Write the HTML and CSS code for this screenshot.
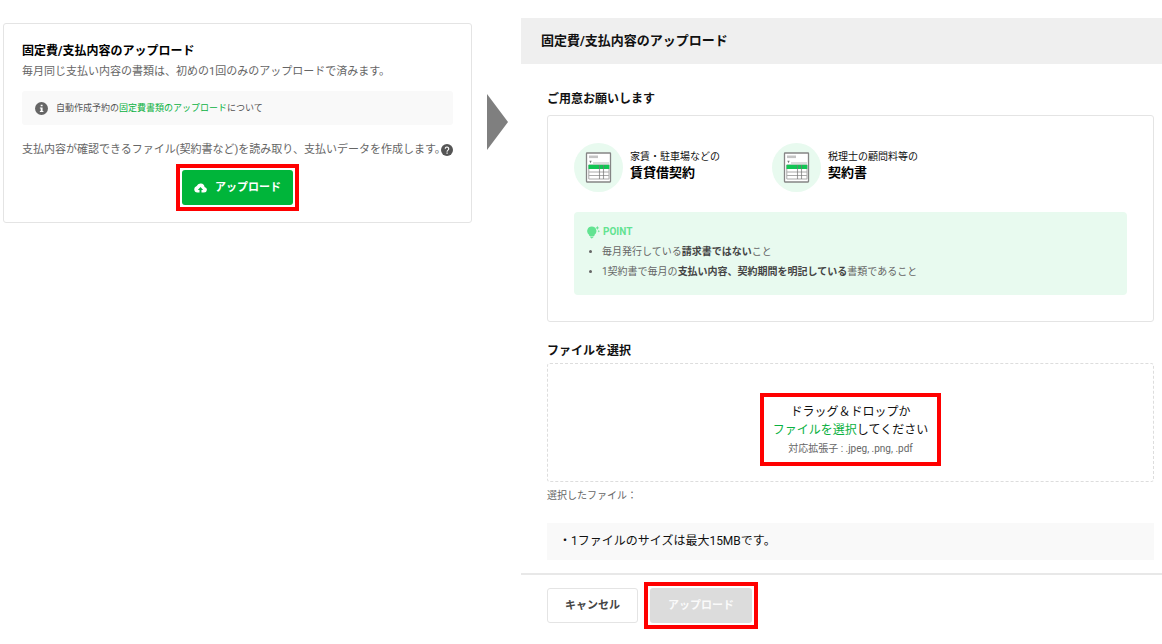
FILE: index.html
```html
<!DOCTYPE html>
<html lang="ja">
<head>
<meta charset="utf-8">
<meta name="viewport" content="width=device-width, initial-scale=1">
<title>固定費/支払内容のアップロード</title>
<link rel="stylesheet" href="styles.css">
</head>
<body>
<svg class="defs" width="0" height="0" aria-hidden="true">
  <symbol id="doc" viewBox="0 0 49 49">
    <circle cx="24.500" cy="24.500" r="24.500" fill="#e8faef"/>
    <rect x="12.500" y="10" width="24" height="29" rx="0.500" fill="#fff" stroke="#858585" stroke-width="1.300"/>
    <path d="M15 12.500h9v2.600h-9z" fill="#c4c4c4"/>
    <path d="M15.300 17.800h2.400l-1.200 2.400z" fill="#777"/>
    <path d="M19 20h16" stroke="#c5c5c5" stroke-width="1.200"/>
    <path d="M14.800 22h20.200v14h-20.200z" fill="#fff" stroke="#aaa" stroke-width="1"/>
    <path d="M14.800 29h20.200M14.800 32.500h20.200" stroke="#aaa" stroke-width="1"/>
    <path d="M14.500 21.800h20.800v4.200h-20.800z" fill="#12c553"/>
    <path d="M25.500 22v14M29.500 22v14" stroke="#777" stroke-width="1.100" opacity=".7"/>
  </symbol>
</svg>
<main class="flow">
  <section class="card">
    <h1 class="card-title">固定費/支払内容のアップロード</h1>
    <p class="card-text">毎月同じ支払い内容の書類は、初めの1回のみのアップロードで済みます。</p>
    <div class="info">
      <svg class="icon-info" viewBox="0 0 24 24" aria-hidden="true"><circle cx="12" cy="12" r="12" fill="#666"/><path d="M10.500 5h3.500v3h-3.500zM9 10h5v6.500h1.500v2h-6.500v-2h1.500v-4.500h-1.500z" fill="#fff"/></svg>
      <span>自動作成予約の<a href="#about">固定費書類のアップロード</a>について</span>
    </div>
    <div class="help-line">
      <p class="card-text">支払内容が確認できるファイル(契約書など)を読み取り、支払いデータを作成します。</p>
      <svg class="icon-help" viewBox="0 0 24 24" role="img" aria-label="ヘルプ"><circle cx="12" cy="12" r="12" fill="#555"/><path d="M8.500 9.500a3.500 3.500 0 1 1 5.500 2.800c-1.400 1-1.900 1.500-1.900 3" fill="none" stroke="#fff" stroke-width="2.200"/><path d="M10.900 17.200h2.400v2.400h-2.400z" fill="#fff"/></svg>
    </div>
    <div class="highlight">
      <button type="button" class="btn btn-primary">
        <svg class="icon-cloud" viewBox="0 0 24 18" aria-hidden="true"><path d="M19.500 7A7.600 7.600 0 0 0 5 5.200 6.300 6.300 0 0 0 6 17.500h4.200v-5H7l5-5.500 5 5.500h-3.200v5h4.700A5.300 5.300 0 0 0 19.500 7z" fill="#fff"/></svg>
        アップロード
      </button>
    </div>
  </section>

  <svg class="arrow" viewBox="0 0 21 56" aria-hidden="true"><path d="M0 0l21 28-21 28z" fill="#7f7f7f"/></svg>

  <section class="panel">
    <h2 class="panel-head">固定費/支払内容のアップロード</h2>
    <div class="panel-body">
      <h3 class="label">ご用意お願いします</h3>
      <div class="box">
        <div class="docs">
          <div class="doc">
            <svg class="doc-icon" aria-hidden="true"><use href="#doc"/></svg>
            <p class="doc-text">家賃・駐車場などの<strong>賃貸借契約</strong></p>
          </div>
          <div class="doc">
            <svg class="doc-icon" aria-hidden="true"><use href="#doc"/></svg>
            <p class="doc-text">税理士の顧問料等の<strong>契約書</strong></p>
          </div>
        </div>
        <div class="point">
          <p class="point-title">
            <svg class="icon-bulb" viewBox="0 0 13 13" aria-hidden="true"><path d="M4.800.5a4.600 4.600 0 0 1 2.600 8.400v1H2.200v-1A4.600 4.600 0 0 1 4.800.5zM2.800 10.500h4l-.8 1.200h-.5l-.7 1-.7-1h-.5zM10.300-.2l.6 1.500 1.500.6-1.500.6-.6 1.500-.6-1.500-1.300-.6 1.300-.6zM11.800 4l.4.800.8.400-.8.400-.4.800-.4-.8-.8-.4.800-.4z" fill="#62e391"/></svg>
            POINT
          </p>
          <ul class="point-list">
            <li>毎月発行している<strong>請求書ではない</strong>こと</li>
            <li>1契約書で毎月の<strong>支払い内容、契約期間を明記している</strong>書類であること</li>
          </ul>
        </div>
      </div>

      <h3 class="label">ファイルを選択</h3>
      <div class="dropzone">
        <div class="highlight drop-note">
          <p class="drop-text">ドラッグ＆ドロップか<br><label class="pick" for="file">ファイルを選択</label>してください</p>
          <p class="drop-ext">対応拡張子 : .jpeg, .png, .pdf</p>
          <input class="file-input" type="file" id="file" accept=".jpeg,.png,.pdf">
        </div>
      </div>
      <p class="selected">選択したファイル：</p>
      <p class="limit">・1ファイルのサイズは最大15MBです。</p>
    </div>
    <footer class="panel-foot">
      <button type="button" class="btn btn-cancel">キャンセル</button>
      <div class="highlight">
        <button type="button" class="btn btn-disabled" disabled>アップロード</button>
      </div>
    </footer>
  </section>
</main>
</body>
</html>
```
FILE: styles.css
```css
* { box-sizing: border-box; }

body {
  margin: 0;
  background: #fff;
  color: #111;
  font-family: Roboto, "Noto Sans CJK JP", sans-serif;
  font-size: 11px;
  line-height: 18px;
}

h1, h2, h3, p, ul { margin: 0; padding: 0; }

a, .pick { color: #0ab141; text-decoration: none; }

.defs { position: absolute; }

.flow {
  display: grid;
  grid-template-columns: minmax(0, 469fr) auto minmax(0, 641fr);
  align-items: start;
  padding: 18px 0 0 3px;
}

/* Upload card */
.card {
  margin-top: 5px;
  padding: 18px 18px 11px;
  border: 1px solid #e4e4e4;
  border-radius: 3px;
}

.card-title {
  margin-bottom: 2px;
  font-size: 12px;
  line-height: 18px;
  color: #000;
}

.card-text { line-height: 20px; color: #666; white-space: nowrap; }

.info {
  display: flex;
  align-items: center;
  gap: 8px;
  margin: 9px 0 15px;
  padding: 8px 13px;
  border-radius: 3px;
  background: #f9f9f9;
  color: #555;
  font-size: 9px;
}

.icon-info { width: 13px; height: 13px; }

.help-line { display: flex; align-items: center; }

.help-line .card-text { min-width: 0; }

.icon-help { flex: none; width: 12px; height: 12px; }

.card .highlight { margin: 4px auto 0; }

/* Red frame round an element */
.highlight {
  width: fit-content;
  padding: 2px;
  border: 4px solid #f00;
}

.btn {
  display: flex;
  align-items: center;
  justify-content: center;
  height: 35px;
  padding: 0 17px;
  border: 0;
  border-radius: 3px;
  font: bold 11px/18px Roboto, "Noto Sans CJK JP", sans-serif;
}

.btn-primary {
  gap: 8px;
  padding: 0 12px;
  background: #00b53a;
  color: #fff;
}

.icon-cloud { width: 13px; height: 10px; }

.arrow {
  width: 21px;
  height: 56px;
  margin: 76px 13px 0 15px;
}

/* Upload dialog */
.panel-head {
  padding: 14px 20px;
  background: #efefef;
  font-size: 13px;
  line-height: 18px;
  color: #111;
}

.panel-body { padding: 26px 8px 13px 26px; }

.label { font-size: 12px; line-height: 18px; }

.box {
  margin: 7px 0 20px;
  padding: 27px 26px 26px;
  border: 1px solid #e4e4e4;
  border-radius: 3px;
}

.docs { display: flex; flex-wrap: wrap; }

.doc {
  display: flex;
  align-items: center;
  gap: 7px;
  min-width: 198px;
}

.doc-icon { width: 49px; height: 49px; }

.doc-text {
  padding-bottom: 6px;
  font-size: 10px;
  line-height: 16px;
}

.doc-text strong { display: block; font-size: 13px; color: #000; }

.point {
  margin-top: 20px;
  padding: 10px 13px 13px;
  border-radius: 4px;
  background: #e8faef;
  color: #666;
  font-size: 10px;
  line-height: 20px;
}

.point-title {
  display: flex;
  align-items: center;
  gap: 3px;
  color: #62e391;
  font-weight: bold;
}

.icon-bulb { width: 13px; height: 13px; }

.point-list { padding-left: 15px; }

.point-list strong { color: #444; }

.dropzone {
  display: flex;
  justify-content: center;
  margin-top: 4px;
  padding: 29px 0 15px;
  border: 1px dashed #ddd;
  border-radius: 3px;
}

.box + .label { margin-bottom: -1px; }

.drop-note {
  position: relative;
  padding: 6px 9px 3px;
  text-align: center;
}

.drop-text { font-size: 12px; }

.drop-ext {
  color: #666;
  font-size: 10px;
  line-height: 20px;
}

.file-input {
  position: absolute;
  width: 1px;
  height: 1px;
  opacity: 0;
}

.selected {
  margin-top: 5px;
  color: #666;
  font-size: 10px;
}

.limit {
  margin-top: 18px;
  padding: 9px 12px;
  background: #f9f9f9;
  font-size: 12px;
  line-height: 19px;
}

.panel-foot {
  display: flex;
  align-items: center;
  gap: 6px;
  padding: 7px 26px;
  border-top: 2px solid #e8e8e8;
}

.btn-cancel {
  border: 1px solid #e4e4e4;
  background: #fff;
  color: #444;
}

.btn-disabled { padding: 0 18px; background: #dcdcdc; color: #fafafa; }
```
